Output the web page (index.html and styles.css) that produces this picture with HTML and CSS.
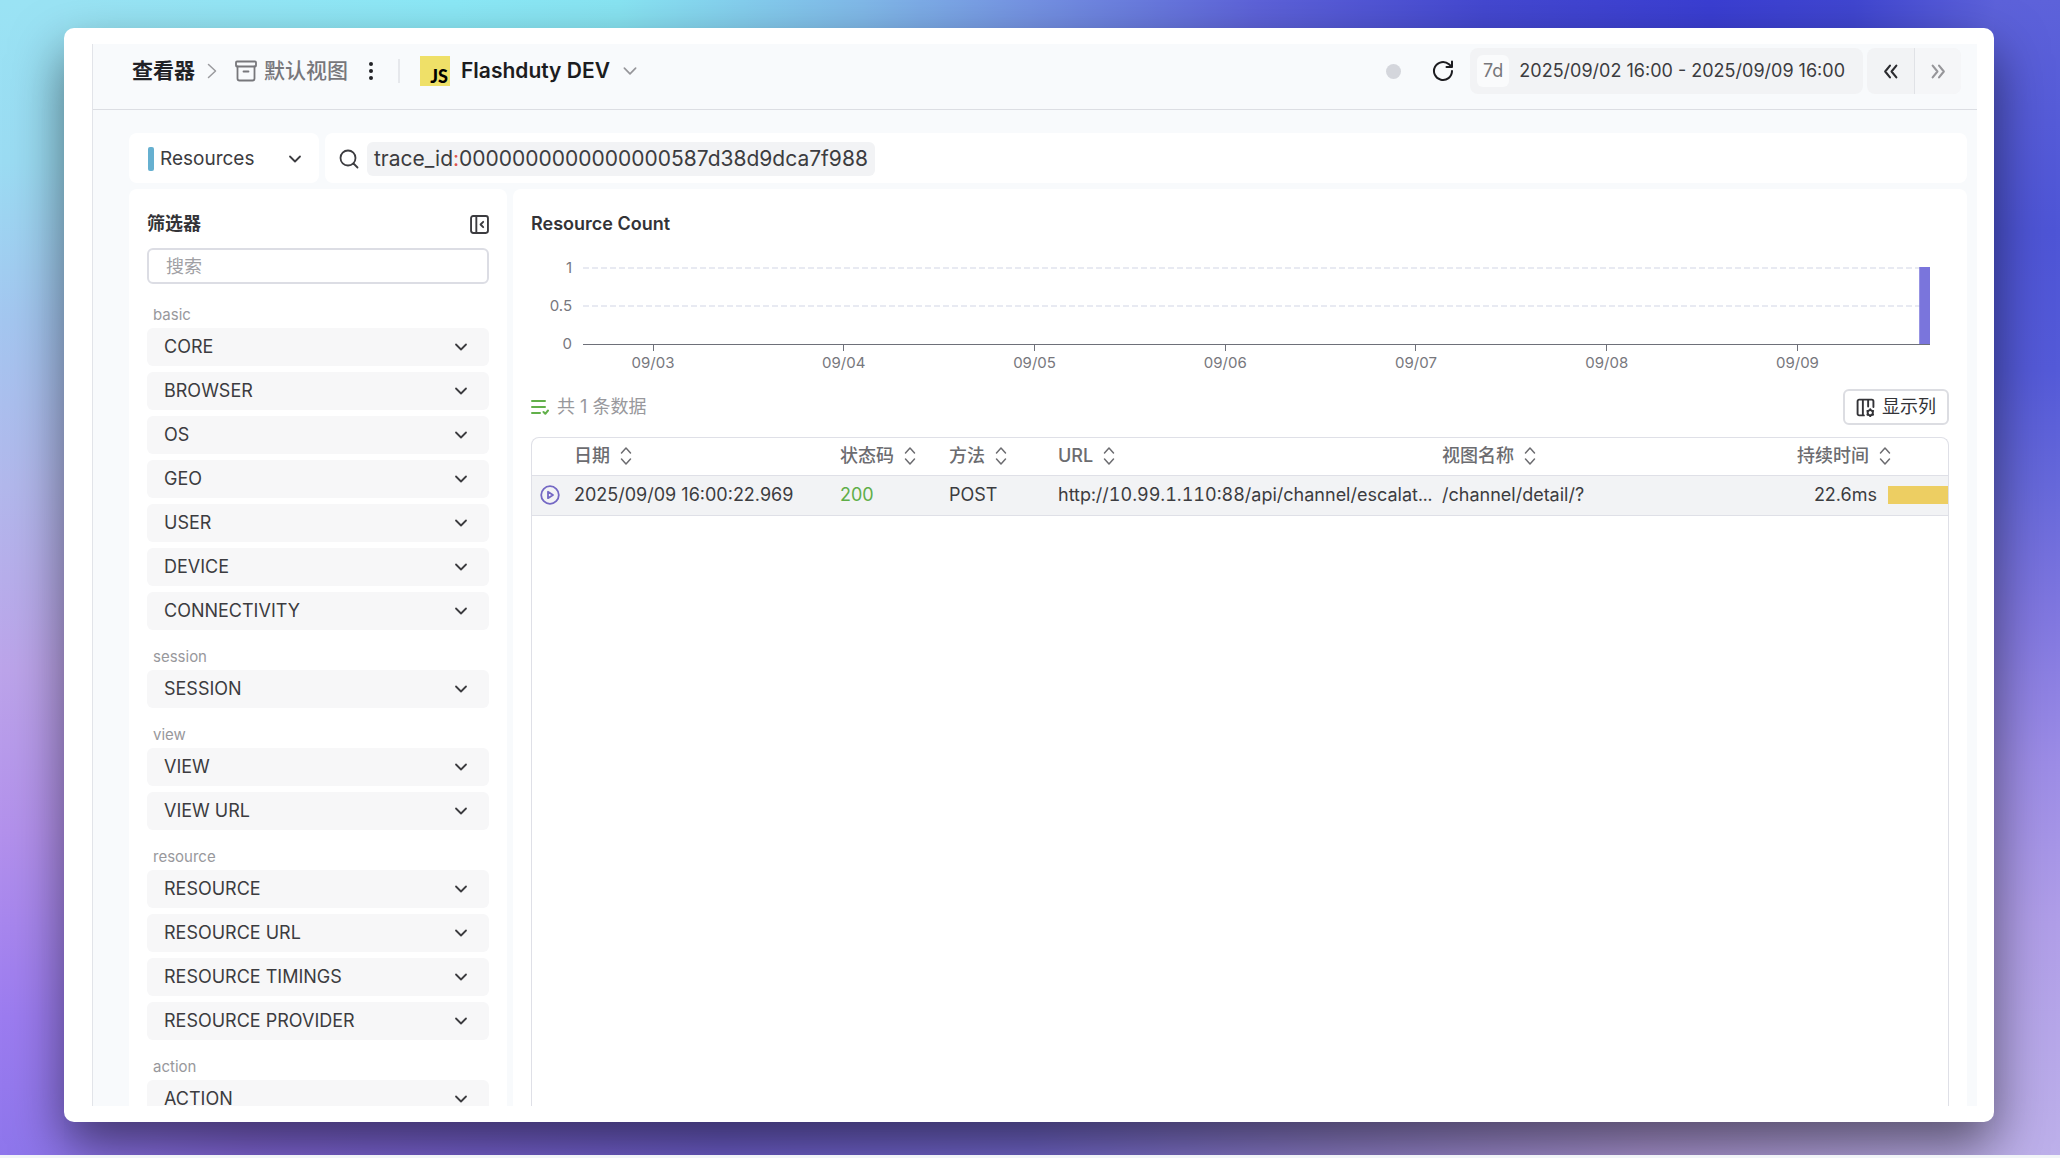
FILE: index.html
```html
<!DOCTYPE html>
<html lang="zh-CN">
<head>
<meta charset="utf-8">
<title>查看器 - Flashduty DEV</title>
<link rel="stylesheet" href="styles.css">
</head>
<body>
<svg class="defs" aria-hidden="true">
  <symbol id="down" viewBox="0 0 16 16"><path d="M3 5.500 8 10.500l5-5"/></symbol>
  <symbol id="sort" viewBox="0 0 12 20"><path d="M1.500 7 6 2l4.500 5M1.500 13 6 18l4.500-5"/></symbol>
</svg>
<div class="stage">
<div class="window">
<div class="app">
  <header class="topbar">
    <nav class="crumbs">
      <a class="crumb-root" href="#">查看器</a>
      <svg class="crumb-sep" viewBox="0 0 10 16"><path d="M1.500 1.500 8.500 8l-7 6.500"/></svg>
      <a class="crumb-view" href="#">
        <svg class="ic-archive" viewBox="0 0 22 22"><rect x="1" y="1.500" width="20" height="5" rx="1"/><path d="M2.500 6.500v12a2 2 0 0 0 2 2h13a2 2 0 0 0 2-2v-12M8.500 11.500h5"/></svg>
        默认视图
      </a>
      <button class="icon-btn more" aria-label="更多"><svg viewBox="0 0 6 20"><circle cx="3" cy="3" r="2"/><circle cx="3" cy="10" r="2"/><circle cx="3" cy="17" r="2"/></svg></button>
    </nav>
    <span class="divider"></span>
    <button class="app-switch">
      <span class="js-logo">JS</span>
      <span>Flashduty DEV</span>
      <svg class="chev"><use href="#down"/></svg>
    </button>
    <div class="tools">
      <span class="status"></span>
      <button class="icon-btn refresh" aria-label="刷新"><svg viewBox="0 0 22 22"><path d="M20 11a9 9 0 1 1-3-6.700L20 7M20 1.500V7h-5.500"/></svg></button>
      <button class="range"><span class="range-tag">7d</span><span>2025/09/02 16:00 - 2025/09/09 16:00</span></button>
      <div class="pager">
        <button aria-label="上一时段"><svg viewBox="0 0 16 16"><path d="M7.500 2.500 3 8l4.500 5.500M13.500 2.500 9 8l4.500 5.500"/></svg></button>
        <button aria-label="下一时段" disabled><svg viewBox="0 0 16 16"><path d="M2.500 2.500 7 8l-4.500 5.500M8.500 2.500 13 8l-4.500 5.500"/></svg></button>
      </div>
    </div>
  </header>
  <main class="content">
    <div class="query">
      <label class="type-box">
        <span class="type-mark"></span>
        <select aria-label="数据类型"><option>Resources</option></select>
        <svg class="chev"><use href="#down"/></svg>
      </label>
      <div class="search-box">
        <svg class="ic-search" viewBox="0 0 20 20"><circle cx="9" cy="9" r="7.500"/><path d="M14.500 14.500 18.500 18.500"/></svg>
        <span class="token">trace_id<b>:</b>0000000000000000587d38d9dca7f988</span>
        <input type="text" aria-label="查询条件">
      </div>
    </div>
    <div class="panels">
      <aside class="sidebar">
        <div class="side-head">
          <h2>筛选器</h2>
          <button class="icon-btn collapse" aria-label="收起"><svg viewBox="0 0 18 18"><rect x="1" y="1" width="16" height="16" rx="2"/><path d="M6 1v16M12.500 6.500 10 9l2.500 2.500"/></svg></button>
        </div>
        <input class="side-search" type="text" placeholder="搜索" aria-label="搜索">
        <section><h3>basic</h3>
          <button class="facet">CORE<svg class="chev"><use href="#down"/></svg></button>
          <button class="facet">BROWSER<svg class="chev"><use href="#down"/></svg></button>
          <button class="facet">OS<svg class="chev"><use href="#down"/></svg></button>
          <button class="facet">GEO<svg class="chev"><use href="#down"/></svg></button>
          <button class="facet">USER<svg class="chev"><use href="#down"/></svg></button>
          <button class="facet">DEVICE<svg class="chev"><use href="#down"/></svg></button>
          <button class="facet">CONNECTIVITY<svg class="chev"><use href="#down"/></svg></button>
        </section>
        <section><h3>session</h3>
          <button class="facet">SESSION<svg class="chev"><use href="#down"/></svg></button>
        </section>
        <section><h3>view</h3>
          <button class="facet">VIEW<svg class="chev"><use href="#down"/></svg></button>
          <button class="facet">VIEW URL<svg class="chev"><use href="#down"/></svg></button>
        </section>
        <section><h3>resource</h3>
          <button class="facet">RESOURCE<svg class="chev"><use href="#down"/></svg></button>
          <button class="facet">RESOURCE URL<svg class="chev"><use href="#down"/></svg></button>
          <button class="facet">RESOURCE TIMINGS<svg class="chev"><use href="#down"/></svg></button>
          <button class="facet">RESOURCE PROVIDER<svg class="chev"><use href="#down"/></svg></button>
        </section>
        <section><h3>action</h3>
          <button class="facet">ACTION<svg class="chev"><use href="#down"/></svg></button>
        </section>
      </aside>
      <section class="results">
        <h2>Resource Count</h2>
        <div class="chart">
          <svg class="plot" role="img" aria-label="Resource Count">
            <g class="grid"><line x1="0" x2="100%" y1="8" y2="8"/><line x1="0" x2="100%" y1="46" y2="46"/></g>
            <rect class="bar" x="99.200%" y="7" width="0.800%" height="77"/>
            <g class="axis">
              <line x1="0" x2="100%" y1="84" y2="84"/>
              <line x1="5.200%" x2="5.200%" y1="84" y2="91"/>
              <line x1="19.360%" x2="19.360%" y1="84" y2="91"/>
              <line x1="33.520%" x2="33.520%" y1="84" y2="91"/>
              <line x1="47.680%" x2="47.680%" y1="84" y2="91"/>
              <line x1="61.840%" x2="61.840%" y1="84" y2="91"/>
              <line x1="76%" x2="76%" y1="84" y2="91"/>
              <line x1="90.160%" x2="90.160%" y1="84" y2="91"/>
            </g>
            <g class="ylab"><text x="-11" y="13">1</text><text x="-11" y="51">0.5</text><text x="-11" y="89">0</text></g>
            <g class="xlab">
              <text x="5.200%" y="108">09/03</text><text x="19.360%" y="108">09/04</text><text x="33.520%" y="108">09/05</text><text x="47.680%" y="108">09/06</text><text x="61.840%" y="108">09/07</text><text x="76%" y="108">09/08</text><text x="90.160%" y="108">09/09</text>
            </g>
          </svg>
        </div>
        <div class="summary">
          <svg class="ic-list" viewBox="0 0 18 16"><path d="M1 2h13M1 8h13M1 14h8M12.500 13l1.800 1.800 2.700-3.300"/></svg>
          <span>共 1 条数据</span>
          <button class="columns"><svg viewBox="0 0 18 18"><path d="M7.500 16.500H3a1.500 1.500 0 0 1-1.500-1.500V3A1.500 1.500 0 0 1 3 1.500h12A1.500 1.500 0 0 1 16.500 3v5.500M6.500 1.500v15M11.500 1.500V8"/><circle cx="13.500" cy="14" r="2.500"/><path d="M13.500 10.500v1M13.500 16.500v1M10.800 12.200l.6.400M15.600 15.400l.6.400M10.800 15.800l.6-.4M15.600 12.600l.6-.4"/></svg>显示列</button>
        </div>
        <div class="table-wrap">
          <table>
            <colgroup><col class="c-icon"><col class="c-date"><col class="c-code"><col class="c-method"><col class="c-url"><col><col class="c-dur"><col class="c-bar"></colgroup>
            <thead><tr>
              <th></th>
              <th><button>日期<svg><use href="#sort"/></svg></button></th>
              <th><button>状态码<svg><use href="#sort"/></svg></button></th>
              <th><button>方法<svg><use href="#sort"/></svg></button></th>
              <th><button>URL<svg><use href="#sort"/></svg></button></th>
              <th><button>视图名称<svg><use href="#sort"/></svg></button></th>
              <th class="h-dur" colspan="2"><button>持续时间<svg><use href="#sort"/></svg></button></th>
            </tr></thead>
            <tbody><tr>
              <td class="t-icon"><svg viewBox="0 0 20 20"><circle cx="10" cy="10" r="8.800"/><path d="M8 6.800v6.400l5-3.200z"/></svg></td>
              <td>2025/09/09 16:00:22.969</td>
              <td class="ok">200</td>
              <td>POST</td>
              <td class="t-url">http://10.99.1.110:88/api/channel/escalat...</td>
              <td>/channel/detail/?</td>
              <td class="t-dur">22.6ms</td>
              <td class="t-bar"><span></span></td>
            </tr></tbody>
          </table>
        </div>
      </section>
    </div>
  </main>
</div>
</div>
</div>
</body>
</html>
```
FILE: styles.css
```css
* { box-sizing: border-box; }

body {
  margin: 0;
  height: 100vh;
  display: flex;
  flex-direction: column;
  overflow: hidden;
  border-bottom: 3px solid #f1f4f8;
  font: 18px/24px Inter, "Noto Sans CJK SC", sans-serif;
  color: #3c3c40;
}

button, input, select { font: inherit; color: inherit; background: none; border: 0; padding: 0; margin: 0; outline: 0; }
button { display: flex; align-items: center; }
a { color: inherit; text-decoration: none; }
h2, h3 { margin: 0; }
svg { fill: none; stroke: currentColor; stroke-width: 1.8; stroke-linecap: round; stroke-linejoin: round; flex: none; }
.defs { display: none; }
.chev { width: 16px; height: 16px; }

.stage {
  flex: 1;
  min-height: 0;
  display: flex;
  padding: 28px 66px 33px 64px;
  background:
    linear-gradient(#9ae3f4, #9bdcf3 14%, #a4c6f0 28%, #b2b8ec 42%, #bca4ea 58%, #b391ec 72%, #9c7cf0 88%, #8e76ec) left / 64px 100% no-repeat,
    linear-gradient(#5d62da, #4e55d6 20%, #545ad8 32%, #6668da 42%, #8278e0 54%, #9c8ce6 66%, #b09ee8 80%, #bdb0ea) right / 66px 100% no-repeat,
    linear-gradient(90deg, #9ae3f4 3%, #8be8f6 22%, #88e4f2 30%, #80b8e8 42%, #7492e2 50%, #5d62d8 61%, #4448d0 72%, #3a3ed2 83%, #4046d0 90%, #5d62da 97%) top / 100% 50px no-repeat,
    linear-gradient(90deg, #8e76ec 3%, #8468dc 12%, #7060d0 35%, #7468d0 50%, #9080cc 65%, #ae98d8 80%, #bdb0ea 97%) bottom / 100% 60px no-repeat;
}

.window {
  flex: 1;
  min-width: 0;
  display: flex;
  padding: 16px 17px 16px 28px;
  background: #fff;
  border-radius: 10px;
  box-shadow: 0 24px 52px rgba(0, 0, 0, .52);
}

.app {
  flex: 1;
  min-width: 0;
  display: flex;
  flex-direction: column;
  background: #f8fafc;
  border-left: 1px solid #e2e4e9;
}

.topbar {
  display: flex;
  align-items: center;
  height: 66px;
  padding: 0 16px 11px 39px;
  border-bottom: 1px solid #dcdee3;
}

.crumbs, .crumb-view, .tools { display: flex; align-items: center; }
.crumb-root { font-size: 21px; font-weight: 700; color: #222226; }
.crumb-sep { width: 10px; height: 16px; margin: 0 18px 0 12px; color: #9a9a9e; stroke-width: 1.5; }
.crumb-view { gap: 7px; font-size: 21px; font-weight: 500; color: #77777b; }
.ic-archive { width: 22px; height: 22px; }
.icon-btn svg { display: block; }
.more { margin-left: 20px; color: #222226; }
.more svg { width: 6px; height: 20px; fill: currentColor; stroke: none; }
.divider { width: 2px; height: 24px; margin: 0 20px 0 24px; background: #e6e8ec; }

.app-switch { gap: 11px; font-size: 21px; font-weight: 600; color: #1c1c20; }
.app-switch .chev { width: 18px; height: 18px; color: #96969a; stroke-width: 1.5; }
.js-logo {
  width: 30px;
  height: 30px;
  padding: 10px 2px 0 0;
  background: #efe068;
  color: #000;
  font: 900 18px/20px Lato, sans-serif;
  text-align: right;
}

.tools { margin-left: auto; }
.status { width: 15px; height: 15px; margin-right: 31px; border-radius: 50%; background: #d4d6dc; }
.refresh { margin-right: 16px; color: #1c1c20; }
.refresh svg { width: 22px; height: 22px; stroke-width: 2; }
.range { height: 46px; padding: 0 18px 0 7px; gap: 10px; background: #f2f3f5; border-radius: 8px; }
.range-tag { padding: 4px 6px; border-radius: 6px; background: #fafbfc; color: #77777b; }
.pager { display: flex; margin-left: 4px; border-radius: 8px; background: #f2f3f5; overflow: hidden; }
.pager button { width: 47px; height: 46px; justify-content: center; color: #2c2c30; }
.pager svg { width: 17px; height: 17px; stroke-width: 2; }
.pager button + button { border-left: 1px solid #e0e2e6; background: #f5f6f8; color: #96969a; }

.content { flex: 1; min-height: 0; display: flex; flex-direction: column; gap: 6px; padding: 23px 10px 0 36px; }

.query { display: flex; gap: 6px; }
.type-box, .search-box { display: flex; align-items: center; height: 50px; border-radius: 8px; background: #fff; }
.type-box { width: 190px; padding: 2px 16px 0 19px; font-size: 19px; }
.type-mark { width: 6px; height: 24px; margin-right: 6px; border-radius: 2px; background: #66b0d0; }
.type-box select { flex: 1; appearance: none; }
.search-box { flex: 1; padding: 2px 14px 0; }
.ic-search { width: 20px; height: 20px; }
.token { margin-left: 8px; padding: 5px 7px; border-radius: 6px; background: #f2f3f5; font-size: 21px; }
.token b { font-weight: 400; color: #e0524a; }
.search-box input { flex: 1; min-width: 0; }

.panels { flex: 1; min-height: 0; display: flex; gap: 6px; }
.sidebar, .results { display: flex; flex-direction: column; background: #fff; border-radius: 8px 8px 0 0; overflow: hidden; }

.sidebar { width: 378px; padding: 23px 18px 0; }
.sidebar > * { flex: none; }
.side-head { display: flex; align-items: center; justify-content: space-between; }
.side-head h2, .results h2 { font-size: 18px; font-weight: 600; line-height: 24px; color: #333337; }
.collapse svg { width: 19px; height: 19px; }
.side-search { height: 36px; margin: 12px 0 10px; padding: 0 17px; border: 2px solid #dcdde4; border-radius: 6px; }
.side-search::placeholder { color: #a0a0a4; opacity: 1; }
.sidebar section { display: flex; flex-direction: column; gap: 6px; margin-bottom: 6px; }
.sidebar h3 { padding: 9px 6px 0; margin-bottom: -5px; font-size: 15px; font-weight: 400; line-height: 24px; color: #98989c; }
.facet { height: 38px; padding: 0 20px 0 17px; justify-content: space-between; border-radius: 6px; background: #f7f7f8; }

.results { flex: 1; min-width: 0; padding: 23px 18px 0 18px; }
.results h2 { flex: none; }
.chart { flex: none; height: 112px; margin-top: 24px; padding: 0 19px 0 52px; }
.plot { display: block; width: 100%; height: 112px; overflow: visible; stroke: none; }
.grid line { stroke: #e8eaf2; stroke-width: 2; stroke-dasharray: 6 3; stroke-linecap: butt; }
.axis line { stroke: #6e7079; stroke-width: 1; stroke-linecap: butt; shape-rendering: crispEdges; }
.bar { fill: #7a75dc; }
.ylab text, .xlab text { font-size: 15px; fill: #77777d; }
.ylab text { text-anchor: end; }
.xlab text { text-anchor: middle; }

.summary { flex: none; display: flex; align-items: center; margin: 17px 0 12px; color: #98989c; }
.ic-list { width: 18px; height: 16px; margin-right: 8px; color: #62b04a; stroke-width: 2; }
.columns { height: 36px; margin-left: auto; padding: 0 11px; gap: 7px; border: 2px solid #dcdde2; border-radius: 6px; color: #333337; }
.columns svg { width: 19px; height: 19px; }

.table-wrap { flex: 1; min-height: 0; border: 1px solid #dfe0e7; border-bottom: 0; border-radius: 8px 8px 0 0; overflow: hidden; }
table { width: 100%; table-layout: fixed; border-collapse: collapse; }
.c-icon { width: 42px; }
.c-date { width: 266px; }
.c-code, .c-method { width: 109px; }
.c-url { width: 384px; }
.c-dur { width: 100px; }
.c-bar { width: 60px; }
th, td { padding: 0 12px 0 0; text-align: left; white-space: nowrap; overflow: hidden; text-overflow: ellipsis; border-bottom: 1px solid #dfe0e7; }
th { height: 37px; font-weight: 500; color: #6c6c70; }
th button { gap: 10px; font-weight: 500; }
th svg { width: 12px; height: 20px; stroke-width: 1.5; }
th.h-dur { padding-right: 57px; }
.h-dur button { margin-left: auto; }
td { height: 40px; background: #f2f3f5; }
td.t-url { padding-right: 0; font-variant-numeric: tabular-nums; }
td.t-icon { padding: 0 0 0 8px; color: #7468c4; }
.t-icon svg { display: block; width: 20px; height: 20px; }
td.ok { color: #5fae48; }
td.t-dur { padding-right: 11px; text-align: right; }
td.t-bar { padding: 0; }
.t-bar span { display: block; height: 18px; background: #edce62; }
```
